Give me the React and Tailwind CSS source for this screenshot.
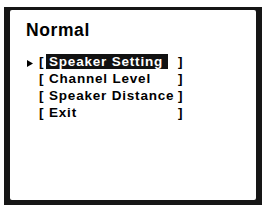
const font = { fontFamily: '"Liberation Sans", Arial, sans-serif' };

const items = ["Speaker Setting", "Channel Level", "Speaker Distance", "Exit"];

const Row = ({ label, active }) => (
  <div className="flex h-[17px] text-[13.5px] leading-[17px] font-bold tracking-[0.8px] text-black">
    <div className="w-[12px] flex items-start">
      {active && (
        <svg className="mt-[6.5px]" width="6" height="7" viewBox="0 0 6 7">
          <polygon points="0,0 6,3.5 0,7" fill="#000" />
        </svg>
      )}
    </div>
    <div className="w-[7px]">[</div>
    <div className="w-[132px]">
      <div
        className={
          active
            ? "mt-[1px] h-[15px] w-[122px] bg-[#111] pl-[3px] leading-[15px] text-white"
            : "pl-[3px]"
        }
      >
        {label}
      </div>
    </div>
    <div>]</div>
  </div>
);

export default function App() {
  return (
    <div className="w-[264px] h-[206px] bg-white" style={font}>
      <div className="ml-[4px] pt-[7px]">
        <div className="w-[258px] h-[198px] bg-[#161616] pl-[6px] pr-[6px] pt-[3px] pb-[5px]">
          <div className="h-full w-full bg-white rounded-[2px] pl-[17px] pt-[10px]">
            <div className="-ml-[1px] text-[17.5px] leading-[20px] font-bold tracking-[0.6px] text-black">
              Normal
            </div>
            <div className="mt-[13px] flex flex-col">
              {items.map((label, i) => (
                <Row key={label} label={label} active={i === 0} />
              ))}
            </div>
          </div>
        </div>
      </div>
    </div>
  );
}
